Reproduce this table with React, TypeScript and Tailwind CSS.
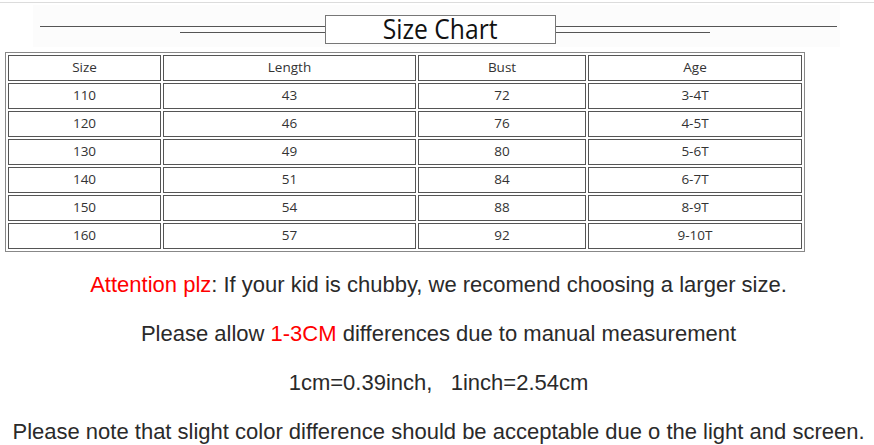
const rows = [
  ["110", "43", "72", "3-4T"],
  ["120", "46", "76", "4-5T"],
  ["130", "49", "80", "5-6T"],
  ["140", "51", "84", "6-7T"],
  ["150", "54", "88", "8-9T"],
  ["160", "57", "92", "9-10T"],
];

const cell = "h-[26px] border border-[#555] p-0 pb-px text-center align-middle";

export default function App() {
  return (
    <div className="h-[445px] w-[874px] overflow-hidden bg-white pt-[2px] font-['Liberation_Sans',Arial,sans-serif] text-[#333]">
      <div className="h-px bg-[#dcdcdc]" />

      {/* title band */}
      <div className="ml-[33px] mt-[2px] flex h-[42px] w-[807px] bg-[#fcfcfc] pl-[7px] pr-[3px]">
        <div className="flex w-[285px] flex-col pt-[21px]">
          <div className="h-px bg-[#555]" />
          <div className="ml-[140px] mt-[5px] h-px bg-[#555]" />
        </div>
        <div className="mt-[10px] flex h-[29px] w-[231px] items-center justify-center border border-[#777] bg-white pb-[3px]">
          <span className="inline-block origin-center scale-x-[0.88] font-['Open_Sans',sans-serif] text-[28px] leading-none text-[#111]">
            Size Chart
          </span>
        </div>
        <div className="flex flex-1 flex-col pt-[21px]">
          <div className="h-px bg-[#555]" />
          <div className="mr-[127px] mt-[5px] h-px bg-[#555]" />
        </div>
      </div>

      {/* table */}
      <table className="ml-[5px] mt-[5px] w-[800px] table-fixed border-separate border-spacing-[2px] border border-[#888] font-['Open_Sans',sans-serif] text-[13.5px] text-[#333]">
        <tbody>
          <tr>
            <td className={`${cell} w-[153px]`}>Size</td>
            <td className={`${cell} w-[253px]`}>Length</td>
            <td className={`${cell} w-[168px]`}>Bust</td>
            <td className={cell}>Age</td>
          </tr>
          {rows.map((r) => (
            <tr key={r[0]}>
              {r.map((v, i) => (
                <td key={i} className={cell}>
                  {v}
                </td>
              ))}
            </tr>
          ))}
        </tbody>
      </table>

      {/* notes */}
      <div className="mt-[8px] flex flex-col items-center pl-[3px] text-[22px] leading-[49px] text-[#2a2a2a]">
        <p>
          <span className="text-[#f00]">Attention plz</span>: If your kid is chubby, we recomend choosing a larger size.
        </p>
        <p>
          Please allow <span className="text-[#f00]">1-3CM</span> differences due to manual measurement
        </p>
        <p className="whitespace-pre">1cm=0.39inch,   1inch=2.54cm</p>
        <p className="whitespace-nowrap">
          Please note that slight color difference should be acceptable due o the light and screen.
        </p>
      </div>
    </div>
  );
}
